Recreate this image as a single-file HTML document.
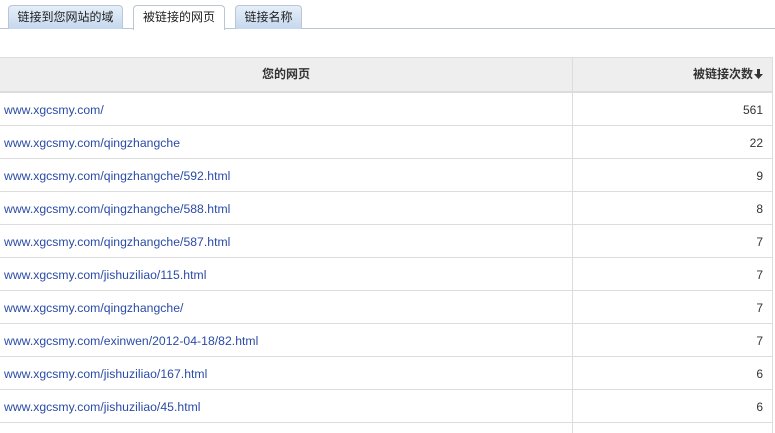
<!DOCTYPE html>
<html><head><meta charset="utf-8"><style>
*{margin:0;padding:0;box-sizing:border-box}
body{width:775px;height:433px;overflow:hidden;background:#fff;font-family:"Liberation Sans","Noto Sans CJK SC",sans-serif;font-size:12px;position:relative}
.base{position:absolute;left:0;top:28px;width:775px;height:1px;background:#b9c6d6}
.tab{position:absolute;top:5px;height:24px;border:1px solid #b9c6d6;border-bottom:none;border-radius:4px 4px 0 0;background:linear-gradient(#e6eff9,#c5d8ee);text-align:center;line-height:22px;color:#222;font-size:12px}
.tab.on{background:#fff;height:25px}
.hd{position:absolute;left:0;top:57px;width:773px;height:36px;background:#eeeeee;border-top:1px solid #dcdcdc;border-bottom:2px solid #dcdcdc;font-weight:bold;color:#333}
.vl{position:absolute;left:572px;top:57px;width:1px;height:376px;background:#dcdcdc}
.rb{position:absolute;left:772px;top:57px;width:1px;height:376px;background:#dcdcdc}
.row{position:absolute;left:0;width:773px;height:33px;border-bottom:1px solid #dcdcdc;line-height:35px}
.row a{position:absolute;left:4px;color:#2a4ba7;text-decoration:none;font-size:12.2px;letter-spacing:0.03px}
.row span{position:absolute;right:10px;color:#333}
</style></head><body>
<div class="base"></div>
<div class="tab" style="left:8px;width:115px">链接到您网站的域</div>
<div class="tab on" style="left:133px;width:92px">被链接的网页</div>
<div class="tab" style="left:235px;width:67px">链接名称</div>
<div class="hd"><div style="position:absolute;left:0;width:572px;text-align:center;line-height:33px">您的网页</div><div style="position:absolute;right:10px;line-height:33px">被链接次数<svg width="9" height="10" viewBox="0 0 9 10" style="vertical-align:-1px;margin-left:1px"><path d="M3 0h3v5h3L4.5 10 0 5h3z" fill="#333"/></svg></div></div>
<div class="row" style="top:93px"><a>www.xgcsmy.com/</a><span>561</span></div>
<div class="row" style="top:126px"><a>www.xgcsmy.com/qingzhangche</a><span>22</span></div>
<div class="row" style="top:159px"><a>www.xgcsmy.com/qingzhangche/592.html</a><span>9</span></div>
<div class="row" style="top:192px"><a>www.xgcsmy.com/qingzhangche/588.html</a><span>8</span></div>
<div class="row" style="top:225px"><a>www.xgcsmy.com/qingzhangche/587.html</a><span>7</span></div>
<div class="row" style="top:258px"><a>www.xgcsmy.com/jishuziliao/115.html</a><span>7</span></div>
<div class="row" style="top:291px"><a>www.xgcsmy.com/qingzhangche/</a><span>7</span></div>
<div class="row" style="top:324px"><a>www.xgcsmy.com/exinwen/2012-04-18/82.html</a><span>7</span></div>
<div class="row" style="top:357px"><a>www.xgcsmy.com/jishuziliao/167.html</a><span>6</span></div>
<div class="row" style="top:390px"><a>www.xgcsmy.com/jishuziliao/45.html</a><span>6</span></div>
<div class="vl"></div><div class="rb"></div>
</body></html>
